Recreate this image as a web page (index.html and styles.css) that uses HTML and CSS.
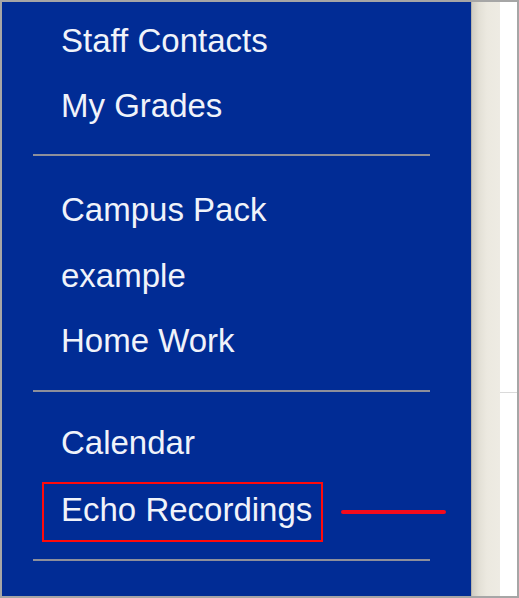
FILE: index.html
```html
<!DOCTYPE html>
<html lang="en">
<head>
    <meta charset="UTF-8">
    <meta name="viewport" content="width=device-width, initial-scale=1.0">
    <title>Course Menu</title>
    <link rel="stylesheet" href="styles.css">
</head>
<body>
    <div class="frame">
        <div class="menu">
            <ul class="group group-1">
                <li>Staff Contacts</li>
                <li>My Grades</li>
            </ul>
            <div class="divider"></div>
            <ul class="group group-2">
                <li>Campus Pack</li>
                <li>example</li>
                <li>Home Work</li>
            </ul>
            <div class="divider"></div>
            <ul class="group group-3">
                <li>Calendar</li>
                <li class="marked">
                    <span class="highlight">Echo Recordings</span>
                    <span class="pointer"></span>
                </li>
            </ul>
            <div class="divider"></div>
        </div>
        <div class="shade"></div>
        <div class="content">
            <div class="content-rule"></div>
        </div>
    </div>
</body>
</html>
```

FILE: styles.css
```css
* {
    box-sizing: border-box;
}

body {
    margin: 0;
    background-color: white;
    font-family: "Liberation Sans", Arial, Helvetica, sans-serif;
}

.frame {
    display: flex;
    width: 519px;
    height: 598px;
    border: 2px solid #a6a6a6;
    overflow: hidden;
}

.menu {
    width: 469px;
    background-color: #012c95;
    color: #f0f3fa;
}

.group {
    list-style: none;
    margin: 0;
    padding: 0;
    font-size: 33px;
    line-height: 65px;
}

.group li {
    padding-left: 59px;
}

.group-1 {
    padding: 6px 0 16px;
}

.group-2 {
    padding: 21px 0 16px;
}

.group-2 li {
    line-height: 65.5px;
}

.group-3 {
    padding: 18px 0 17px;
}

.divider {
    height: 2px;
    width: 397px;
    margin-left: 31px;
    background-color: #8d8f9b;
}

.group li.marked {
    display: flex;
    align-items: center;
    gap: 18px;
    height: 60px;
    margin-top: 7px;
    padding-left: 40px;
}

.highlight {
    display: inline-block;
    border: 2px solid #ff0a0a;
    padding: 0 9px 5px 17px;
    line-height: 51px;
}

.pointer {
    display: inline-block;
    width: 105px;
    height: 4px;
    border-radius: 2px;
    background-color: #f40b1c;
}

.shade {
    width: 29px;
    background: linear-gradient(to right, #9c9a94 0, #cfccc3 1px, #e3e0d6 8px, #ece9e0 16px, #eeebe3 100%);
}

.content {
    flex: 1;
    background-color: white;
    padding-top: 390px;
}

.content-rule {
    height: 1px;
    background-color: #dadada;
}
```
